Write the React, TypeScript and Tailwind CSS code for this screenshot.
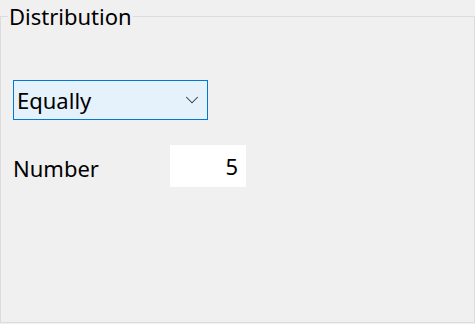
import { ChevronDown } from 'lucide-react';

export default function App() {
  return (
    <div
      className="h-[324px] w-[475px] bg-[#f0f0f0] text-black"
      style={{ fontFamily: '"Noto Sans", "Open Sans", sans-serif' }}
    >
      <fieldset className="h-[323px] w-[475px] border border-[#dcdcdc] px-3">
        <legend className="ml-[-5px] px-[1px] text-[22px] leading-[32px]">Distribution</legend>

        <div className="mt-[48px] flex h-[40px] w-[195px] items-center justify-between border border-[#0078d7] bg-[#e5f1fb] pl-[3px] pr-[4px]">
          <span className="text-[22px] leading-[30px]">Equally</span>
          <ChevronDown size={22} strokeWidth={1.1} className="text-[#333]" />
        </div>

        <div className="mt-[25px] flex items-center">
          <span className="w-[157px] pt-[4px] text-[22px] leading-[30px]">Number</span>
          <div className="flex h-[42px] w-[76px] items-center justify-end bg-white pr-[8px] text-[22px] leading-[30px]">5</div>
        </div>
      </fieldset>
    </div>
  );
}
